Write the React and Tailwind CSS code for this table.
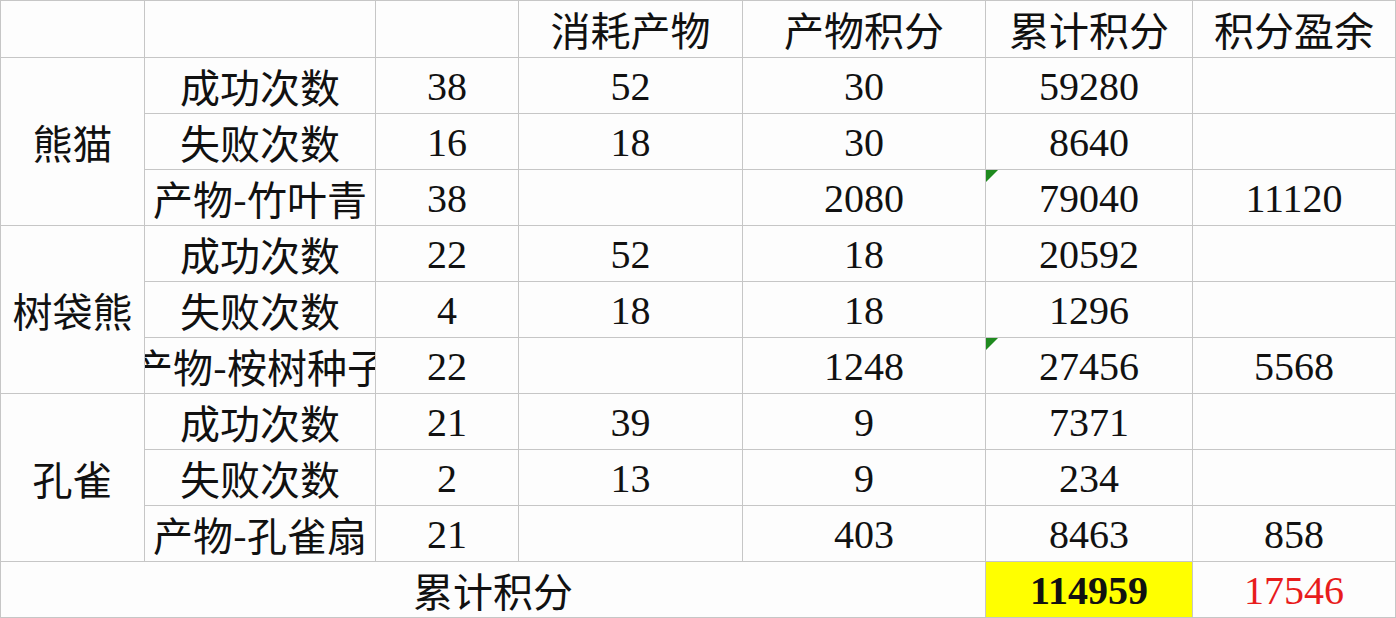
import React from "react";

function Cell({ children, className = "", num = false }) {
  return (
    <div
      className={
        "bg-[#fdfdfd] flex items-center justify-center whitespace-nowrap text-[40px] leading-[1.2] text-[#111] relative " +
        (num
          ? "font-[family-name:Liberation_Serif,Times_New_Roman,serif] pt-[2px] "
          : "font-[family-name:Noto_Sans_CJK_SC,Noto_Sans,sans-serif] ") +
        className
      }
    >
      {children}
    </div>
  );
}

function Tri() {
  return (
    <div className="absolute left-0 top-0 w-0 h-0 border-t-[12px] border-t-[#1f8a1f] border-r-[12px] border-r-transparent" />
  );
}

const groups = [
  {
    name: "熊猫",
    rows: [
      ["成功次数", "38", "52", "30", "59280", ""],
      ["失败次数", "16", "18", "30", "8640", ""],
      ["产物-竹叶青", "38", "", "2080", "79040", "11120", true],
    ],
  },
  {
    name: "树袋熊",
    rows: [
      ["成功次数", "22", "52", "18", "20592", ""],
      ["失败次数", "4", "18", "18", "1296", ""],
      ["产物-桉树种子", "22", "", "1248", "27456", "5568", true],
    ],
  },
  {
    name: "孔雀",
    rows: [
      ["成功次数", "21", "39", "9", "7371", ""],
      ["失败次数", "2", "13", "9", "234", ""],
      ["产物-孔雀扇", "21", "", "403", "8463", "858"],
    ],
  },
];

export default function App() {
  return (
    <div className="w-[1396px] h-[618px] bg-white overflow-hidden">
      <div className="grid grid-cols-[143px_230px_142px_223px_242px_206px_202px] grid-rows-[56px_repeat(10,55px)] gap-px p-px bg-[#c6c6c6] w-[1396px] h-[618px]">
        <Cell />
        <Cell />
        <Cell />
        <Cell>消耗产物</Cell>
        <Cell>产物积分</Cell>
        <Cell>累计积分</Cell>
        <Cell>积分盈余</Cell>
        {groups.map((g) => (
          <React.Fragment key={g.name}>
            <Cell className="row-span-3">{g.name}</Cell>
            {g.rows.map((r, i) => (
              <React.Fragment key={i}>
                <Cell className="overflow-hidden">{r[0]}</Cell>
                <Cell num>{r[1]}</Cell>
                <Cell num>{r[2]}</Cell>
                <Cell num>{r[3]}</Cell>
                <Cell num>
                  {r[6] && <Tri />}
                  {r[4]}
                </Cell>
                <Cell num>{r[5]}</Cell>
              </React.Fragment>
            ))}
          </React.Fragment>
        ))}
        <Cell className="col-span-5">累计积分</Cell>
        <Cell num className="bg-[#ffff00] font-bold">114959</Cell>
        <Cell num className="text-[#e81c1c]">17546</Cell>
      </div>
    </div>
  );
}
